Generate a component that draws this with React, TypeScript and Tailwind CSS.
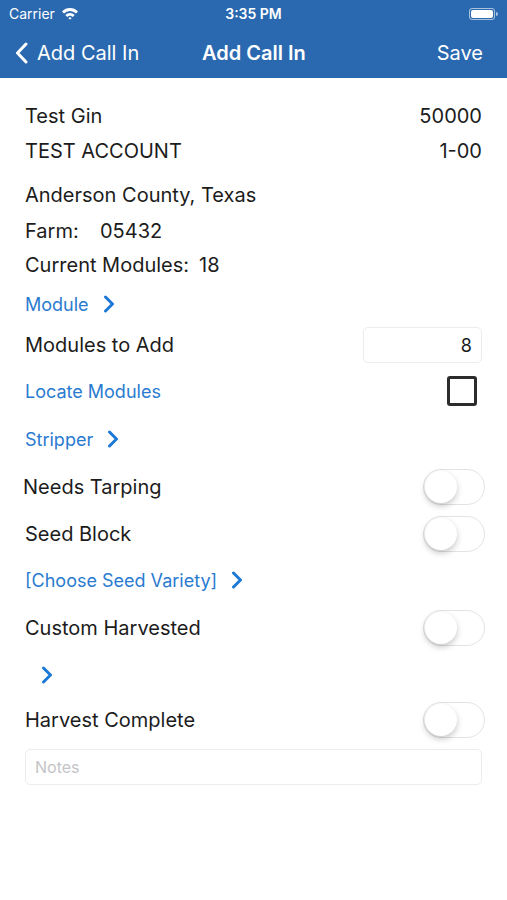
import React from "react";

const font = { fontFamily: "Inter, 'Noto Sans', sans-serif" };

function Chevron({ className = "" }: { className?: string }) {
  return (
    <svg width="12" height="18" viewBox="0 0 12 18" className={className}>
      <path d="M2.5 2 L9.5 9 L2.5 16" fill="none" stroke="#1e78d6" strokeWidth="3" strokeLinecap="round" strokeLinejoin="round" />
    </svg>
  );
}

function Toggle() {
  return (
    <div className="relative -mr-[3px] h-[36px] w-[62px] rounded-full border border-[#e3e3e3] bg-white">
      <div className="absolute left-[1px] top-[1px] h-[32px] w-[32px] rounded-full bg-white shadow-[0_3px_6px_rgba(0,0,0,0.22)]" />
    </div>
  );
}

function LinkRow({ label, className = "" }: { label: string; className?: string }) {
  return (
    <div className={`flex items-center gap-[14px] text-[18px] text-[#2a7bd0] ${className}`}>
      {label && <span>{label}</span>}
      <Chevron />
    </div>
  );
}

function ToggleRow({ label, className = "" }: { label: string; className?: string }) {
  return (
    <div className={`flex items-center justify-between text-[20px] text-[#1c1c1c] ${className}`}>
      <span>{label}</span>
      <Toggle />
    </div>
  );
}

export default function App() {
  return (
    <div className="min-h-[900px] w-[507px] bg-white" style={font}>
      <div className="bg-[#2a69b0] text-white">
        <div className="relative flex h-[27px] items-center px-[9px] text-[14px]">
          <span>Carrier</span>
          <svg width="18" height="13" viewBox="0 0 18 13" className="ml-[6px]">
            <path d="M1 4.5 A11 11 0 0 1 17 4.5 L15 6.6 A8 8 0 0 0 3 6.6 Z" fill="white" />
            <path d="M4.3 8 A6.5 6.5 0 0 1 13.7 8 L11.7 10 A3.8 3.8 0 0 0 6.3 10 Z" fill="white" />
            <path d="M7.4 11.1 A2.2 2.2 0 0 1 10.6 11.1 L9 12.8 Z" fill="white" />
          </svg>
          <span className="absolute left-1/2 -translate-x-1/2 font-semibold">3:35 PM</span>
          <div className="ml-auto flex items-center">
            <div className="h-[12px] w-[26px] rounded-[3px] border border-white/60 p-[1px]">
              <div className="h-full w-full rounded-[2px] bg-white" />
            </div>
            <div className="ml-[1px] h-[4px] w-[2px] rounded-r bg-white/60" />
          </div>
        </div>
        <div className="relative flex h-[51px] items-center px-[15px] text-[20px]">
          <svg width="13" height="22" viewBox="0 0 13 22">
            <path d="M11 2 L2.5 11 L11 20" fill="none" stroke="white" strokeWidth="3" strokeLinecap="round" strokeLinejoin="round" />
          </svg>
          <span className="ml-[9px]">Add Call In</span>
          <span className="absolute left-[202px] font-semibold">Add Call In</span>
          <span className="ml-auto mr-[9px]">Save</span>
        </div>
      </div>

      <div className="px-[25px] pt-[24px] text-[20px] text-[#1c1c1c]">
        <div className="flex h-[28px] items-center justify-between">
          <span>Test Gin</span>
          <span>50000</span>
        </div>
        <div className="mt-[7px] flex h-[28px] items-center justify-between">
          <span>TEST ACCOUNT</span>
          <span>1-00</span>
        </div>
        <div className="mt-[16px] flex h-[28px] items-center">Anderson County, Texas</div>
        <div className="mt-[8px] flex h-[28px] items-center">
          <span className="w-[75px]">Farm:</span>
          <span>05432</span>
        </div>
        <div className="mt-[6px] flex h-[28px] items-center gap-[10px]">
          <span>Current Modules:</span>
          <span>18</span>
        </div>

        <LinkRow label="Module" className="mt-[11px] h-[28px]" />

        <div className="mt-[9px] flex h-[36px] items-center justify-between">
          <span>Modules to Add</span>
          <div className="flex h-[36px] w-[119px] items-center justify-end rounded-[5px] border border-[#ececec] px-[9px] text-[18px]">8</div>
        </div>

        <div className="mt-[13px] flex h-[30px] items-center justify-between">
          <span className="text-[18px] text-[#2a7bd0]">Locate Modules</span>
          <div className="mr-[5px] h-[30px] w-[30px] rounded-[3px] border-[3px] border-[#2c2c2c]" />
        </div>

        <LinkRow label="Stripper" className="mt-[19px] h-[28px]" />

        <ToggleRow label="Needs Tarping" className="-ml-[2px] mt-[16px] h-[36px]" />
        <ToggleRow label="Seed Block" className="mt-[11px] h-[36px]" />

        <LinkRow label="[Choose Seed Variety]" className="mt-[14px] h-[28px]" />

        <ToggleRow label="Custom Harvested" className="mt-[16px] h-[36px]" />

        <LinkRow label="" className="ml-[16px] mt-[15px] h-[28px]" />

        <ToggleRow label="Harvest Complete" className="mt-[13px] h-[36px]" />

        <div className="mt-[11px] flex h-[36px] items-center rounded-[5px] border border-[#ececec] px-[9px] text-[16px] text-[#c4c4c6]">
          Notes
        </div>
      </div>
    </div>
  );
}
